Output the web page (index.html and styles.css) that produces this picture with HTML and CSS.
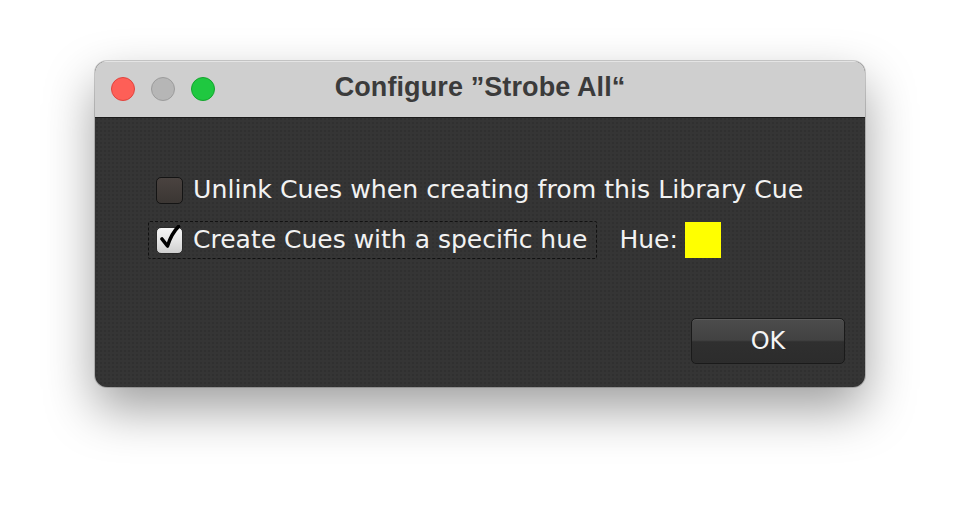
FILE: index.html
```html
<!DOCTYPE html>
<html>
<head>
<meta charset="utf-8">
<link rel="stylesheet" href="styles.css">
</head>
<body>
<div class="window">
  <div class="titlebar">
    <div class="lights">
      <span class="light red"></span>
      <span class="light gray"></span>
      <span class="light green"></span>
    </div>
    <div class="title">Configure ”Strobe All“</div>
  </div>
  <div class="content">
    <div class="row">
      <span class="check"></span>
      <span class="label">Unlink Cues when creating from this Library Cue</span>
    </div>
    <div class="row2">
      <div class="focus">
        <span class="check on">
          <svg viewBox="0 0 28 28" width="28" height="28"><path d="M5 14 L10.5 21 C13 13 16.5 6.5 21.5 1.5" fill="none" stroke="#000" stroke-width="3.6" stroke-linecap="round" stroke-linejoin="round"/></svg>
        </span>
        <span class="label">Create Cues with a specific hue</span>
      </div>
      <span class="label hue">Hue:</span>
      <span class="swatch"></span>
    </div>
    <div class="actions">
      <button class="ok">OK</button>
    </div>
  </div>
</div>
</body>
</html>
```
FILE: styles.css
```css
html, body {
  margin: 0;
  padding: 0;
  background: #ffffff;
}
body {
  width: 960px;
  height: 520px;
  overflow: hidden;
  padding: 61px 0 0 95px;
  box-sizing: border-box;
  font-family: "DejaVu Sans", "Liberation Sans", sans-serif;
}
.window {
  width: 770px;
  height: 326px;
  border-radius: 12px;
  overflow: hidden;
  background-color: #353535;
  background-image:
    radial-gradient(circle at 50% 50%, rgba(0,0,0,0.10) 0.8px, transparent 1.2px);
  background-size: 4px 4px;
  box-shadow: 0 22px 50px rgba(0,0,0,0.38), 0 0 0 1px rgba(0,0,0,0.18);
  display: flex;
  flex-direction: column;
}
.titlebar {
  height: 56px;
  flex: none;
  background: #cfcfcf;
  border-bottom: 1px solid #1b1b1b;
  box-shadow: inset 0 1px 0 #e4e4e4;
  display: flex;
  align-items: center;
  position: relative;
}
.lights {
  display: flex;
  gap: 16px;
  padding-left: 16px;
}
.light {
  width: 24px;
  height: 24px;
  border-radius: 50%;
  box-sizing: border-box;
}
.red { background: #fe5f57; border: 1px solid #e0443e; }
.gray { background: #b6b6b6; border: 1px solid #9c9c9c; }
.green { background: #1fc840; border: 1px solid #13a52d; }
.title {
  position: absolute;
  left: 0;
  right: 0;
  top: 11px;
  text-align: center;
  font-family: "Liberation Sans", sans-serif;
  font-weight: bold;
  font-size: 27px;
  color: #3b3b3b;
  letter-spacing: 0.1px;
}
.content {
  flex: 1;
  padding: 58px 20px 23px 53px;
  display: flex;
  flex-direction: column;
}
.row {
  display: flex;
  align-items: center;
  padding-left: 8px;
  height: 28px;
}
.row2 {
  display: flex;
  align-items: center;
  margin-top: 17px;
}
.focus {
  display: flex;
  align-items: center;
  border: 1px dashed #111;
  border-radius: 2px;
  padding: 4px 9px 4px 7px;
}
.check {
  width: 27px;
  height: 27px;
  box-sizing: border-box;
  border: 1px solid #141414;
  border-radius: 5px;
  background: linear-gradient(#4a4340, #3b3633);
  margin-right: 10px;
  flex: none;
  position: relative;
}
.check.on {
  background: linear-gradient(#f6f6f6 0%, #e6e6e6 50%, #cfcfcf 100%);
  border-color: #2a2a2a;
}
.check svg {
  position: absolute;
  left: 0;
  top: -3px;
}
.label {
  color: #f2f2f2;
  font-size: 25.2px;
  line-height: 28px;
  white-space: nowrap;
}
.row2 .label {
  font-size: 25px;
}
.hue {
  margin-left: 22px;
  margin-right: 7px;
}
.swatch {
  width: 36px;
  height: 36px;
  background: #ffff00;
}
.actions {
  margin-top: auto;
  display: flex;
  justify-content: flex-end;
}
.ok {
  width: 154px;
  height: 46px;
  border: 1px solid #1a1a1a;
  border-radius: 5px;
  background: linear-gradient(#4c4c4c 0%, #424242 48%, #2f2f2f 52%, #2c2c2c 100%);
  color: #f5f5f5;
  font-family: "DejaVu Sans", sans-serif;
  font-size: 24px;
  padding: 0;
  box-shadow: inset 0 1px 0 rgba(255,255,255,0.08);
}
```
